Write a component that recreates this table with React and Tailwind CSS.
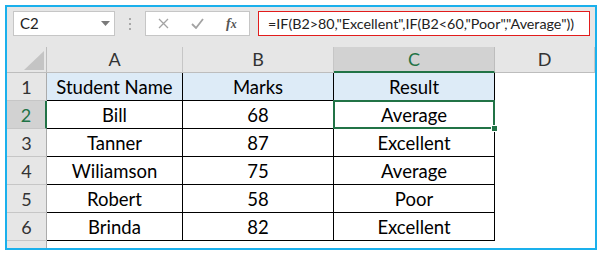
const font = { fontFamily: "Lato, 'Liberation Sans', sans-serif" };

const rows = [
  ["Student Name", "Marks", "Result"],
  ["Bill", "68", "Average"],
  ["Tanner", "87", "Excellent"],
  ["Wiliamson", "75", "Average"],
  ["Robert", "58", "Poor"],
  ["Brinda", "82", "Excellent"],
];

const columns = ["A", "B", "C", "D"];

function Corner() {
  return (
    <div className="bg-[#e6e6e6] border-r border-b border-[#bdbdbd] flex items-end justify-end pr-[2px] pb-[2px]">
      <svg width="20" height="19" viewBox="0 0 20 19">
        <polygon points="20,0 20,19 0,19" fill="#c4c4c4" />
      </svg>
    </div>
  );
}

function ColHeader({ label }) {
  const active = label === "C";
  return (
    <div
      className={`flex items-center justify-center text-[18px] border-r ${
        active
          ? "bg-[#d2d2d2] text-[#217346] border-[#bdbdbd] border-b-2 border-b-[#217346]"
          : "bg-[#e6e6e6] text-[#333] border-[#c6c6c6] border-b border-b-[#bdbdbd]"
      }`}
    >
      {label}
    </div>
  );
}

function RowHeader({ n }) {
  const active = n === 2;
  return (
    <div
      className={`flex items-center justify-center pt-[2px] text-[18px] border-b border-[#c6c6c6] ${
        active
          ? "bg-[#d2d2d2] text-[#217346] border-r-2 border-r-[#217346]"
          : "bg-[#e6e6e6] text-[#333] border-r border-r-[#ababab]"
      }`}
    >
      {n}
    </div>
  );
}

export default function App() {
  return (
    <div className="w-[604px] h-[258px] bg-white p-[5px]" style={font}>
      <div className="w-[592px] h-[245px] border-2 border-[#1ab0ec] flex flex-col overflow-hidden bg-white">
        {/* formula bar */}
        <div className="h-[40px] bg-[#e6e6e6] flex items-start pt-[4px] pl-[6px] shrink-0">
          <div className="w-[102px] h-[25px] bg-white border border-[#c6c6c6] flex items-center justify-between pl-[6px] pr-[4px]">
            <span className="text-[15px] text-[#222]">C2</span>
            <svg width="9" height="5" viewBox="0 0 9 5">
              <polygon points="0,0 9,0 4.5,5" fill="#7a7a7a" />
            </svg>
          </div>
          <div className="w-[30px] h-[25px] flex flex-col items-center justify-center gap-[3px]">
            <span className="w-[2px] h-[2px] bg-[#a8a8a8]" />
            <span className="w-[2px] h-[2px] bg-[#a8a8a8]" />
            <span className="w-[2px] h-[2px] bg-[#a8a8a8]" />
          </div>
          <div className="w-[105px] h-[25px] bg-white border border-[#c6c6c6] flex items-center pl-[12px] gap-[22px]">
            <svg width="11" height="11" viewBox="0 0 11 11">
              <path d="M1 1 L10 10 M10 1 L1 10" stroke="#a3a3a3" strokeWidth="1.3" />
            </svg>
            <svg width="13" height="11" viewBox="0 0 13 11">
              <path d="M1 6 L5 10 L12 1" stroke="#a3a3a3" strokeWidth="1.8" fill="none" />
            </svg>
            <span className="text-[14px] italic text-[#555] font-bold" style={{ fontFamily: "'Liberation Serif', serif" }}>
              f<span className="text-[12px]">x</span>
            </span>
          </div>
          <div className="ml-[8px] w-[332px] h-[25px] bg-white border border-[#e21c1c] flex items-center pl-[9px] text-[14.3px] text-[#222] whitespace-nowrap">
            =IF(B2&gt;80,"Excellent",IF(B2&lt;60,"Poor","Average"))
          </div>
        </div>

        {/* sheet */}
        <div className="grid grid-cols-[40px_136px_151px_161px_1fr] grid-rows-[26px_repeat(6,28px)_1fr] flex-1 text-[18.5px] text-black">
          <Corner />
          {columns.map((c) => (
            <ColHeader key={c} label={c} />
          ))}
          {rows.map((r, i) => (
            <div key={i} className="contents">
              <RowHeader n={i + 1} />
              {r.map((v, j) => (
                <div
                  key={j}
                  className={`relative flex items-center justify-center pt-[3px] border-r border-b border-black ${
                    i === 0 ? "bg-[#ddebf7]" : "bg-white"
                  } ${i === 1 && j === 2 ? "z-10" : ""}`}
                >
                  {v}
                  {i === 1 && j === 2 && (
                    <>
                      <div className="absolute -top-px -left-px -right-px -bottom-px border-2 border-[#217346]" />
                      <div className="absolute -right-[4px] -bottom-[4px] w-[7px] h-[7px] bg-[#217346] border border-white" />
                    </>
                  )}
                </div>
              ))}
              <div className="bg-white" />
            </div>
          ))}
          <div className="bg-[#e6e6e6] border-r border-[#ababab]" />
          <div className="col-span-4 bg-white" />
        </div>
      </div>
    </div>
  );
}
